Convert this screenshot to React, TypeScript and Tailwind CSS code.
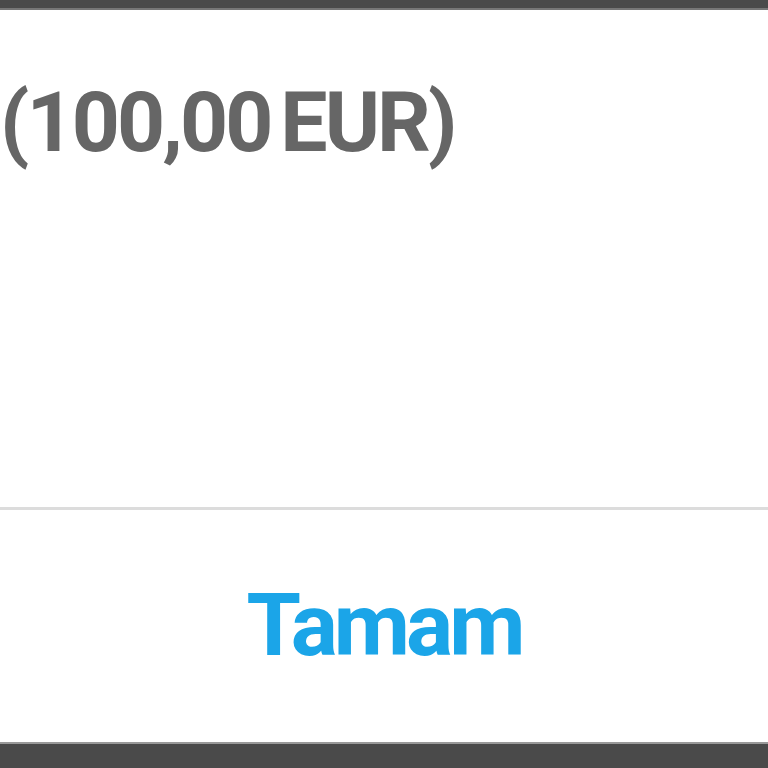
import React from "react";

function App() {
  return (
    <div className="flex h-screen w-full flex-col overflow-hidden bg-white font-['Roboto',sans-serif]">
      <div className="h-[10px] shrink-0 border-b-2 border-[#777] bg-[#4a4a4a]" />
      <div className="flex-1">
        <p className="mt-[71px] text-[84px] font-bold leading-none tracking-[-0.035em] text-[#666] [word-spacing:-8px]">
          (100,00 EUR)
        </p>
      </div>
      <div className="h-[3px] shrink-0 bg-[#dcdcdc]" />
      <div className="flex h-[232px] shrink-0 items-center justify-center">
        <button className="mt-[-2px] text-[88px] font-bold leading-none tracking-[-0.045em] text-[#1ba5e8]">
          Tamam
        </button>
      </div>
      <div className="h-[26px] shrink-0 border-t-2 border-[#999] bg-[#4a4a4a]" />
    </div>
  );
}

export default App;
